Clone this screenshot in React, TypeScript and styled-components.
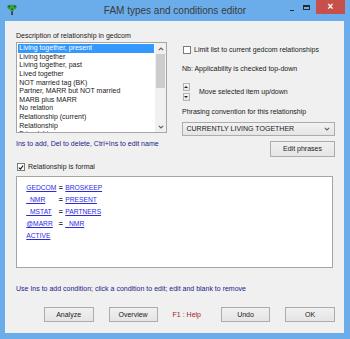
import styled, { createGlobalStyle } from 'styled-components';

const GlobalStyle = createGlobalStyle`
  html, body {
    margin: 0;
    padding: 0;
  }
  body {
    width: 350px;
    height: 339px;
    overflow: hidden;
    font-family: 'Liberation Sans', Arial, sans-serif;
    color: #1a1a1a;
  }
`;

const relationships = [
  'Living together, present',
  'Living together',
  'Living together, past',
  'Lived together',
  'NOT married tag (BK)',
  'Partner, MARR but NOT married',
  'MARB plus MARR',
  'No relation',
  'Relationship (current)',
  'Relationship',
  'Friendship',
];

const conditions = [
  { key: 'GEDCOM', value: 'BROSKEEP' },
  { key: '_NMR', value: 'PRESENT' },
  { key: '_MSTAT', value: 'PARTNERS' },
  { key: '@MARR', value: '_NMR' },
  { key: 'ACTIVE' },
];

const TreeIcon = () => (
  <svg width="10" height="11" viewBox="0 0 10 11">
    <rect x="4.3" y="5" width="1.6" height="6" fill="#3b2f2a" />
    <circle cx="2.5" cy="3" r="2.3" fill="#2f9a3a" />
    <circle cx="7.4" cy="3" r="2.3" fill="#2f9a3a" />
    <circle cx="5" cy="5" r="2.4" fill="#3aa845" />
    <circle cx="2.2" cy="2.6" r="0.9" fill="#1b5e22" />
    <circle cx="7.6" cy="2.4" r="0.9" fill="#1b5e22" />
    <circle cx="5" cy="5.2" r="0.9" fill="#1b5e22" />
    <circle cx="4.8" cy="1.4" r="0.7" fill="#c43c2c" />
  </svg>
);

const Chevron = ({ up }: { up?: boolean }) => (
  <svg width="6" height="4" viewBox="0 0 6 4">
    <path
      d={up ? 'M0.8 3.2 L3 1 L5.2 3.2' : 'M0.8 0.8 L3 3 L5.2 0.8'}
      fill="none"
      stroke="#606060"
      strokeWidth="1.1"
    />
  </svg>
);

const CheckMark = () => (
  <svg width="7" height="7" viewBox="0 0 7 7">
    <path d="M1 3.6 L2.8 5.4 L6 1.4" fill="none" stroke="#1a1a1a" strokeWidth="1.3" />
  </svg>
);

export default function App() {
  return (
    <>
      <GlobalStyle />
      <Window>
        <TitleBar>
          <TitleIcon>
            <TreeIcon />
          </TitleIcon>
          <TitleText>FAM types and conditions editor</TitleText>
          <TitleControls>
            <MinButton />
            <MaxButton />
            <CloseButton>×</CloseButton>
          </TitleControls>
        </TitleBar>

        <Frame>
          <Client>
            <TopSection>
              <LeftColumn>
                <Label>Description of relationship in gedcom</Label>
                <ListBox>
                  <ListItems>
                    {relationships.map((item, i) => (
                      <ListItem key={item} $selected={i === 0}>
                        {item}
                      </ListItem>
                    ))}
                  </ListItems>
                  <ScrollBar>
                    <ScrollArrow>
                      <Chevron up />
                    </ScrollArrow>
                    <ScrollThumb />
                    <ScrollTrack />
                    <ScrollArrow>
                      <Chevron />
                    </ScrollArrow>
                  </ScrollBar>
                </ListBox>
                <Hint $top={6.5}>Ins to add, Del to delete, Ctrl+Ins to edit name</Hint>
                <CheckRow $top={15.5}>
                  <CheckBox>
                    <CheckMark />
                  </CheckBox>
                  <CheckLabel>Relationship is formal</CheckLabel>
                </CheckRow>
              </LeftColumn>

              <RightColumn>
                <CheckRow $top={24.5}>
                  <CheckBox />
                  <CheckLabel>Limit list to current gedcom relationships</CheckLabel>
                </CheckRow>
                <Label $top={11.5}>Nb: Applicability is checked top-down</Label>
                <SpinRow>
                  <SpinButtons>
                    <SpinButton>
                      <Arrow $up />
                    </SpinButton>
                    <SpinButton>
                      <Arrow />
                    </SpinButton>
                  </SpinButtons>
                  <Label $top={0}>Move selected item up/down</Label>
                </SpinRow>
                <Label $top={7}>Phrasing convention for this relationship</Label>
                <Select>
                  <span>CURRENTLY LIVING TOGETHER</span>
                  <Chevron />
                </Select>
                <Button $width={65} $height={16}>
                  Edit phrases
                </Button>
              </RightColumn>
            </TopSection>

            <ConditionBox>
              {conditions.map((c) => (
                <ConditionRow key={c.key}>
                  <CondLink>{c.key}</CondLink>
                  <Equals>{c.value ? '=' : ''}</Equals>
                  {c.value && <CondLink>{c.value}</CondLink>}
                </ConditionRow>
              ))}
            </ConditionBox>

            <Hint $top={17}>
              Use Ins to add condition; click a condition to edit; edit and blank to remove
            </Hint>

            <ButtonBar>
              <Button $width={50} $height={15}>Analyze</Button>
              <Button $width={49} $height={15}>Overview</Button>
              <HelpText>F1 : Help</HelpText>
              <Button $width={49} $height={15}>Undo</Button>
              <Button $width={50} $height={15}>OK</Button>
            </ButtonBar>
          </Client>
        </Frame>
      </Window>
    </>
  );
}

const Window = styled.div`
  width: 350px;
  height: 339px;
  background: #6badea;
  display: flex;
  flex-direction: column;
`;

const TitleBar = styled.div`
  height: 21px;
  display: grid;
  grid-template-columns: 68px 1fr 68px;
  align-items: start;
`;

const TitleIcon = styled.div`
  padding: 4px 0 0 7px;
  display: flex;
`;

const TitleText = styled.div`
  text-align: center;
  font-size: 10px;
  line-height: 21px;
  color: #3a3a3a;
  white-space: nowrap;
`;

const TitleControls = styled.div`
  display: flex;
  justify-content: flex-end;
  padding-right: 5px;
`;

const MinButton = styled.div`
  width: 14px;
  height: 14px;
  display: flex;
  justify-content: center;

  &::after {
    content: '';
    margin-top: 9.5px;
    width: 4.5px;
    height: 1.4px;
    background: #2a2a2a;
  }
`;

const MaxButton = styled.div`
  width: 14px;
  height: 14px;
  margin-right: 3px;
  display: flex;
  justify-content: center;

  &::after {
    content: '';
    margin-top: 5px;
    width: 7px;
    height: 5px;
    box-sizing: border-box;
    border: 1px solid #2a2a2a;
    border-top-width: 2px;
  }
`;

const CloseButton = styled.div`
  width: 29px;
  height: 14px;
  background: #c7504b;
  color: #fff;
  font-size: 10px;
  font-weight: bold;
  line-height: 13px;
  text-align: center;
`;

const Frame = styled.div`
  flex: 1;
  display: flex;
  padding: 0 6px 6px 5px;
`;

const Client = styled.div`
  flex: 1;
  background: #f0f0f0;
  padding: 0 9px 0 11px;
  display: flex;
  flex-direction: column;
  font-size: 7px;
  line-height: 8px;
`;

const TopSection = styled.div`
  display: flex;
  gap: 15px;
  align-items: flex-start;
`;

const LeftColumn = styled.div`
  width: 151px;
  display: flex;
  flex-direction: column;
`;

const RightColumn = styled.div`
  width: 153px;
  display: flex;
  flex-direction: column;
`;

const Label = styled.div<{ $top?: number }>`
  margin-top: ${(p) => (p.$top ?? 11)}px;
  white-space: nowrap;
`;

const ListBox = styled.div`
  margin-top: 2px;
  height: 91px;
  box-sizing: border-box;
  border: 1px solid #a5a5a5;
  background: #fff;
  display: flex;
`;

const ListItems = styled.div`
  flex: 1;
  padding: 1.3px 1px 0 1px;
  overflow: hidden;
`;

const ListItem = styled.div<{ $selected?: boolean }>`
  height: 8.6px;
  line-height: 8.6px;
  padding-left: 1.3px;
  white-space: nowrap;
  background: ${(p) => (p.$selected ? '#3399ff' : 'transparent')};
  color: ${(p) => (p.$selected ? '#fff' : '#1a1a1a')};
`;

const ScrollBar = styled.div`
  width: 11px;
  background: #f0f0f0;
  display: flex;
  flex-direction: column;
`;

const ScrollArrow = styled.div`
  height: 11px;
  display: flex;
  align-items: center;
  justify-content: center;
`;

const ScrollThumb = styled.div`
  height: 34px;
  margin: 0 1px;
  background: #cdcdcd;
`;

const ScrollTrack = styled.div`
  flex: 1;
`;

const Hint = styled.div<{ $top: number }>`
  margin-top: ${(p) => p.$top}px;
  color: #22228a;
  white-space: nowrap;
`;

const CheckRow = styled.div<{ $top: number }>`
  margin-top: ${(p) => p.$top}px;
  display: flex;
  align-items: center;
  height: 8px;
`;

const CheckBox = styled.div`
  width: 8px;
  height: 8px;
  box-sizing: border-box;
  border: 1px solid #7a7a7a;
  background: #fff;
  display: flex;
  align-items: center;
  justify-content: center;
  margin-left: 0.5px;
`;

const CheckLabel = styled.span`
  margin-left: 3.5px;
  white-space: nowrap;
`;

const SpinRow = styled.div`
  margin-top: 10px;
  display: flex;
  align-items: center;
  gap: 9px;
`;

const SpinButtons = styled.div`
  display: flex;
  flex-direction: column;
  gap: 1.5px;
  margin-left: 0.5px;
`;

const SpinButton = styled.div`
  width: 7.5px;
  height: 8px;
  box-sizing: border-box;
  border: 1px solid #b4b4b4;
  background: linear-gradient(#f6f6f6, #e6e6e6);
  display: flex;
  align-items: center;
  justify-content: center;
`;

const Arrow = styled.div<{ $up?: boolean }>`
  width: 0;
  height: 0;
  border-left: 2px solid transparent;
  border-right: 2px solid transparent;
  ${(p) => (p.$up ? 'border-bottom: 2px solid #222;' : 'border-top: 2px solid #222;')}
`;

const Select = styled.div`
  margin-top: 6px;
  height: 14.5px;
  box-sizing: border-box;
  border: 1px solid #acacac;
  background: linear-gradient(#f2f2f2, #e5e5e5);
  display: flex;
  align-items: center;
  justify-content: space-between;
  padding: 0 4px 0 3.5px;
  white-space: nowrap;
`;

const Button = styled.div<{ $width: number; $height: number }>`
  width: ${(p) => p.$width}px;
  height: ${(p) => p.$height}px;
  box-sizing: border-box;
  border: 1px solid #acacac;
  background: linear-gradient(#f0f0f0, #e5e5e5);
  display: flex;
  align-items: center;
  justify-content: center;
  white-space: nowrap;
  align-self: flex-end;
  margin-top: 5px;
`;

const ConditionBox = styled.div`
  margin-top: 5px;
  margin-right: 2px;
  height: 92px;
  box-sizing: border-box;
  border: 1px solid #a5a5a5;
  background: #fff;
  padding: 5.3px 0 0 9.3px;
  display: flex;
  flex-direction: column;
`;

const ConditionRow = styled.div`
  display: grid;
  grid-template-columns: 30px 9px auto;
  height: 12px;
  line-height: 12px;
  align-items: center;
`;

const CondLink = styled.span`
  color: #2a2ae0;
  text-decoration: underline;
  font-size: 6.7px;
  white-space: nowrap;
`;

const Equals = styled.span`
  text-align: center;
  color: #333;
  font-weight: bold;
`;

const ButtonBar = styled.div`
  margin-top: 14px;
  display: flex;
  justify-content: flex-end;
  align-items: center;
  gap: 15px;

  & > div {
    margin-top: 0;
  }
`;

const HelpText = styled.span`
  color: #a82020;
  margin-right: 5px;
  white-space: nowrap;
`;
